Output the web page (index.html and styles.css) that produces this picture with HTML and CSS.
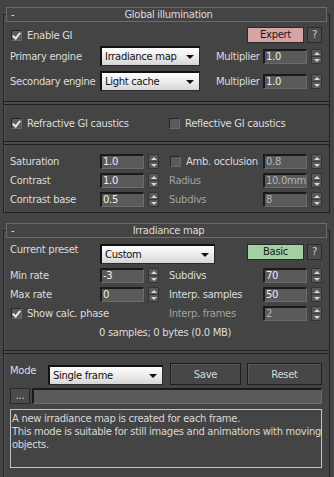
FILE: index.html
```html
<!DOCTYPE html>
<html lang="en">
<head>
    <meta charset="UTF-8" />
    <title>V-Ray GI settings</title>
    <link rel="stylesheet" href="styles.css">
</head>
<body>

<div class="panel">

    <!-- Global illumination rollout -->
    <section class="rollout">
        <div class="roll-head"><span class="minus">-</span><span class="roll-title">Global illumination</span></div>
        <div class="roll-body">
            <div class="grp grp-engine">
                <div class="row row-top">
                    <label class="chk on"><span class="box"></span>Enable GI</label>
                    <button class="btn-mode expert">Expert</button>
                    <button class="btn-help">?</button>
                </div>
                <div class="row row-combo">
                    <span class="lbl">Primary engine</span>
                    <div class="combo w100">Irradiance map</div>
                    <span class="lbl-mult">Multiplier</span>
                    <div class="num">1.0</div>
                    <div class="spin"><i></i><i></i></div>
                </div>
                <div class="row row-combo row-second">
                    <span class="lbl">Secondary engine</span>
                    <div class="combo w100">Light cache</div>
                    <span class="lbl-mult">Multiplier</span>
                    <div class="num">1.0</div>
                    <div class="spin"><i></i><i></i></div>
                </div>
            </div>
            <div class="sep"></div>
            <div class="grp grp-caustics">
                <div class="halves">
                    <label class="chk on"><span class="box"></span>Refractive GI caustics</label>
                    <label class="chk right"><span class="box"></span>Reflective GI caustics</label>
                </div>
            </div>
            <div class="sep"></div>
            <div class="grp grp-color">
                <div class="halves">
                    <div class="half">
                        <span class="lbl">Saturation</span>
                        <div class="num">1.0</div>
                        <div class="spin"><i></i><i></i></div>
                    </div>
                    <div class="half right">
                        <label class="chk rlbl"><span class="box"></span>Amb. occlusion</label>
                        <div class="num off">0.8</div>
                        <div class="spin"><i></i><i></i></div>
                    </div>
                </div>
                <div class="halves">
                    <div class="half">
                        <span class="lbl">Contrast</span>
                        <div class="num">1.0</div>
                        <div class="spin"><i></i><i></i></div>
                    </div>
                    <div class="half right">
                        <span class="rlbl dim">Radius</span>
                        <div class="num off">10.0mm</div>
                        <div class="spin"><i></i><i></i></div>
                    </div>
                </div>
                <div class="halves">
                    <div class="half">
                        <span class="lbl">Contrast base</span>
                        <div class="num">0.5</div>
                        <div class="spin"><i></i><i></i></div>
                    </div>
                    <div class="half right">
                        <span class="rlbl dim">Subdivs</span>
                        <div class="num off">8</div>
                        <div class="spin"><i></i><i></i></div>
                    </div>
                </div>
            </div>
        </div>
    </section>

    <!-- Irradiance map rollout -->
    <section class="rollout second">
        <div class="roll-head"><span class="minus">-</span><span class="roll-title">Irradiance map</span></div>
        <div class="roll-body">
            <div class="grp grp-irr">
                <div class="row row-combo">
                    <span class="lbl">Current preset</span>
                    <div class="combo w115">Custom</div>
                    <button class="btn-mode basic">Basic</button>
                    <button class="btn-help">?</button>
                </div>
                <div class="halves">
                    <div class="half">
                        <span class="lbl">Min rate</span>
                        <div class="num">-3</div>
                        <div class="spin"><i></i><i></i></div>
                    </div>
                    <div class="half right">
                        <span class="rlbl">Subdivs</span>
                        <div class="num">70</div>
                        <div class="spin"><i></i><i></i></div>
                    </div>
                </div>
                <div class="halves">
                    <div class="half">
                        <span class="lbl">Max rate</span>
                        <div class="num">0</div>
                        <div class="spin"><i></i><i></i></div>
                    </div>
                    <div class="half right">
                        <span class="rlbl">Interp. samples</span>
                        <div class="num">50</div>
                        <div class="spin"><i></i><i></i></div>
                    </div>
                </div>
                <div class="halves">
                    <div class="half">
                        <label class="chk on"><span class="box"></span>Show calc. phase</label>
                    </div>
                    <div class="half right">
                        <span class="rlbl dim">Interp. frames</span>
                        <div class="num off">2</div>
                        <div class="spin"><i></i><i></i></div>
                    </div>
                </div>
                <div class="stats">0 samples; 0 bytes (0.0 MB)</div>
            </div>
            <div class="sep"></div>
            <div class="grp grp-mode">
                <div class="row row-mode">
                    <span class="lbl-mode">Mode</span>
                    <div class="combo w115">Single frame</div>
                    <button class="btn save">Save</button>
                    <button class="btn reset">Reset</button>
                </div>
                <div class="row row-path">
                    <button class="btn-dots">...</button>
                    <div class="path"></div>
                </div>
                <div class="desc">A new irradiance map is created for each frame.<br>This mode is suitable for still images and animations with moving<br>objects.</div>
            </div>
        </div>
    </section>

</div>

</body>
</html>
```

FILE: styles.css
```css
body {
    margin: 0;
    background: #444444;
    font-family: "DejaVu Sans", Verdana, sans-serif;
    font-size: 10px;
    letter-spacing: -0.3px;
    color: #dcdcdc;
    overflow: hidden;
}
.panel {
    width: 334px;
    height: 477px;
    padding-top: 7px;
    box-sizing: border-box;
}
button {
    font-family: inherit;
    font-size: 10px;
    letter-spacing: inherit;
    padding: 0;
    margin: 0;
    cursor: default;
}

/* rollouts */
.rollout {
    margin: 0 4px 0 3px;
}
.rollout.second {
    margin-top: 10px;
}
.roll-head {
    position: relative;
    z-index: 1;
    height: 15px;
    margin: 0 3px;
    box-sizing: border-box;
    border: 1px solid #6a6a6a;
    background: #444444;
    display: flex;
    align-items: center;
}
.minus {
    width: 0;
    padding-left: 4px;
    line-height: 13px;
}
.roll-title {
    flex: 1;
    text-align: center;
    line-height: 13px;
}
.roll-body {
    margin-top: -8px;
    border: 1px solid #222222;
    box-shadow: inset 1px 0 0 #555555;
    padding: 0 7px 0 6px;
}
.second .roll-body {
    height: 260px;
    border-bottom: none;
}

.sep {
    height: 2px;
    margin: 0 -7px 0 -6px;
    border-top: 1px solid #1e1e1e;
    border-bottom: 1px solid #1e1e1e;
    background: #4c4c4c;
}

/* groups */
.grp-engine {
    padding: 12px 0 10px;
}
.grp-caustics {
    padding: 11px 0 10px;
}
.grp-color {
    padding: 9px 0 5px;
    display: flex;
    flex-direction: column;
    gap: 4px;
}
.grp-irr {
    padding: 13px 0 10px;
    display: flex;
    flex-direction: column;
    gap: 4px;
}
.grp-mode {
    padding: 9px 0 0;
}

.row {
    display: flex;
    align-items: center;
}
.row-top {
    height: 16px;
}
.row-combo {
    height: 20px;
    margin-top: 3px;
}
.row-second {
    margin-top: 5px;
}
.grp-irr .row-combo {
    margin-top: 0;
    align-items: flex-start;
}
.halves {
    display: flex;
    align-items: center;
    min-height: 15px;
}
.half {
    display: flex;
    align-items: center;
    width: 159px;
}
.half.right, .chk.right {
    width: 153px;
}
.grp-caustics .chk:first-child {
    width: 158px;
}

.lbl {
    width: 90px;
    white-space: nowrap;
}
.rlbl {
    width: 94px;
    white-space: nowrap;
}
.dim {
    color: #a2a2a2;
}
.lbl-mult {
    margin-left: 16px;
    width: 47px;
}

/* checkbox */
.chk {
    display: flex;
    align-items: center;
    white-space: nowrap;
}
.box {
    width: 11px;
    height: 11px;
    margin: 0 5px 0 1px;
    box-sizing: border-box;
    background: #5a5a5a;
    border-top: 1px solid #262626;
    border-left: 1px solid #262626;
    border-right: 1px solid #6a6a6a;
    border-bottom: 1px solid #6a6a6a;
    position: relative;
}
.chk.on .box::after {
    content: "";
    position: absolute;
    left: 2px;
    top: 0px;
    width: 3px;
    height: 6px;
    border-right: 2px solid #e8e8e8;
    border-bottom: 2px solid #e8e8e8;
    transform: rotate(40deg);
}
.half.right .chk {
    width: 94px;
}

/* number fields */
.num {
    width: 44px;
    height: 15px;
    box-sizing: border-box;
    background: #5a5a5a;
    border-top: 2px solid #1a1a1a;
    border-left: 2px solid #1a1a1a;
    border-right: 1px solid #6c6c6c;
    border-bottom: 1px solid #6c6c6c;
    color: #eeeeee;
    padding-left: 1px;
    line-height: 12px;
    white-space: nowrap;
    overflow: hidden;
}
.num.off {
    color: #b4b4b4;
}
.spin {
    width: 11px;
    height: 15px;
    margin-left: 4px;
    box-sizing: border-box;
    display: flex;
    flex-direction: column;
    background: #585858;
    border: 1px solid #333333;
    border-radius: 1px;
}
.spin i {
    flex: 1;
    position: relative;
}
.spin i:first-child {
    border-bottom: 1px solid #3a3a3a;
}
.spin i::after {
    content: "";
    position: absolute;
    left: 2px;
    border-left: 3px solid transparent;
    border-right: 3px solid transparent;
}
.spin i:first-child::after {
    top: 2px;
    border-bottom: 3px solid #d8d8d8;
}
.spin i:last-child::after {
    top: 2px;
    border-top: 3px solid #d8d8d8;
}

/* combo boxes */
.combo {
    height: 20px;
    box-sizing: border-box;
    border-top: 2px solid #111111;
    border-left: 2px solid #111111;
    border-right: 1px solid #2a2a2a;
    border-bottom: 1px solid #2a2a2a;
    background: linear-gradient(180deg, #fdfdfd 0%, #ececec 50%, #d6d6d6 100%);
    color: #111111;
    padding-left: 3px;
    line-height: 17px;
    position: relative;
    white-space: nowrap;
}
.combo::after {
    content: "";
    position: absolute;
    right: 5px;
    top: 7px;
    border-left: 4px solid transparent;
    border-right: 4px solid transparent;
    border-top: 4px solid #111111;
}
.w100 {
    width: 100px;
}
.w115 {
    width: 115px;
}

/* buttons */
.btn-mode {
    margin-left: auto;
    width: 57px;
    height: 16px;
    border: 1px solid #2a2a2a;
    color: #1a1a1a;
    line-height: 14px;
}
.expert {
    background: #d6a4a4;
}
.basic {
    background: #a2d0a2;
}
.btn-help {
    width: 15px;
    height: 16px;
    margin-left: 3px;
    border: 1px solid #2a2a2a;
    background: #4c4c4c;
    color: #cfcfcf;
    line-height: 14px;
}
.stats {
    margin: 1px 0 0 89px;
    height: 14px;
    line-height: 14px;
}

.row-mode {
    height: 22px;
}
.lbl-mode {
    width: 38px;
    align-self: flex-start;
    margin-top: 2px;
}
.row-mode .combo {
    align-self: flex-end;
}
.btn {
    height: 22px;
    background: #474747;
    border: 1px solid #1e1e1e;
    box-shadow: inset 1px 1px 0 #575757;
    color: #d8d8d8;
}
.save {
    width: 71px;
    margin-left: 7px;
}
.reset {
    width: 75px;
    margin-left: 6px;
}
.row-path {
    margin-top: 3px;
    height: 16px;
    gap: 2px;
}
.btn-dots {
    width: 20px;
    height: 16px;
    background: #4c4c4c;
    border: 1px solid #262626;
    color: #d0d0d0;
    line-height: 12px;
}
.path {
    flex: 1;
    height: 16px;
    box-sizing: border-box;
    background: #5a5a5a;
    border-top: 2px solid #1a1a1a;
    border-left: 2px solid #1a1a1a;
    border-right: 1px solid #6c6c6c;
    border-bottom: 1px solid #6c6c6c;
}
.desc {
    margin-top: 5px;
    height: 59px;
    box-sizing: border-box;
    border: 1px solid #c4c4c4;
    padding: 2px 1px;
    line-height: 13px;
    white-space: nowrap;
    color: #d8d8d8;
}
```
